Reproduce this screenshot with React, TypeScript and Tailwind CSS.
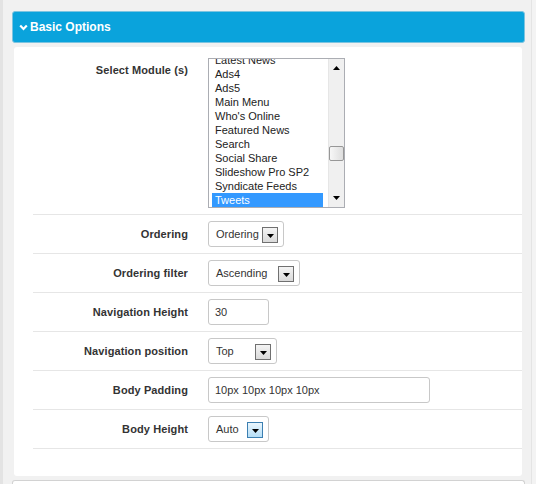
const font = { fontFamily: '"Liberation Sans", Arial, sans-serif' };

const modules = [
  "Latest News",
  "Ads4",
  "Ads5",
  "Main Menu",
  "Who's Online",
  "Featured News",
  "Search",
  "Social Share",
  "Slideshow Pro SP2",
  "Syndicate Feeds",
  "Tweets",
];

function ArrowDown({ className = "" }: { className?: string }) {
  return (
    <svg width="7" height="4" viewBox="0 0 7 4" className={className}>
      <polygon points="0,0 7,0 3.5,4" fill="#000" />
    </svg>
  );
}

function ArrowUp() {
  return (
    <svg width="7" height="4" viewBox="0 0 7 4">
      <polygon points="0,4 7,4 3.5,0" fill="#000" />
    </svg>
  );
}

function SelectBox({ value, width, active = false }: { value: string; width: string; active?: boolean }) {
  return (
    <div
      className={`${width} h-[26px] flex items-center bg-white border border-[#c8c8c8] rounded-[3px] pl-[7px] text-[11px] text-[#333]`}
    >
      <span>{value}</span>
      <div
        className={
          active
            ? "ml-auto mr-[5px] mt-[2px] w-[16px] h-[16px] flex items-center justify-center border border-[#3c7fb1] bg-gradient-to-b from-[#eaf6fd] to-[#b5def6]"
            : "ml-auto mr-[5px] mt-[2px] w-[16px] h-[16px] flex items-center justify-center border border-[#707070] bg-gradient-to-b from-[#f4f4f4] to-[#dadada]"
        }
      >
        <ArrowDown className="mt-[2px]" />
      </div>
    </div>
  );
}

function TextInput({ value, width }: { value: string; width: string }) {
  return (
    <div
      className={`${width} h-[26px] flex items-center bg-white border border-[#c8c8c8] rounded-[3px] pl-[6px] text-[11px] text-[#333]`}
    >
      {value}
    </div>
  );
}

function Row({ label, children }: { label: string; children: React.ReactNode }) {
  return (
    <div className="h-[39px] flex items-center border-b border-[#e6e6e6]">
      <div className="w-[155px] text-right text-[11px] font-bold text-[#333] tracking-[0.1px]">{label}</div>
      <div className="ml-[20px]">{children}</div>
    </div>
  );
}

function ModuleList() {
  return (
    <div className="w-[137px] h-[150px] flex border border-[#abadb3] bg-white overflow-hidden">
      <div className="w-[119px] pl-[3px] overflow-hidden">
        <div className="mt-[-6px]">
          {modules.map((m) => (
            <div
              key={m}
              className={
                m === "Tweets"
                  ? "h-[14px] leading-[14px] pl-[3px] w-[111px] text-[11px] bg-[#3399ff] text-white"
                  : "h-[14px] leading-[14px] pl-[3px] w-[111px] text-[11px] text-[#222]"
              }
            >
              {m}
            </div>
          ))}
        </div>
      </div>
      <div className="w-[16px] flex flex-col items-center bg-[#f0f0f0] border-l border-[#e6e6e6]">
        <div className="h-[17px] flex items-center justify-center pt-[1px]">
          <ArrowUp />
        </div>
        <div className="mt-[70px] w-[15px] h-[15px] rounded-[2px] border border-[#979797] bg-gradient-to-r from-[#f7f7f7] to-[#dedede]" />
        <div className="mt-auto h-[17px] flex items-center justify-center pb-[2px]">
          <ArrowDown />
        </div>
      </div>
    </div>
  );
}

export default function App() {
  return (
    <div className="w-[536px] h-[484px] flex bg-[#f1f1f1] overflow-hidden" style={font}>
      <div className="w-[3px] bg-[#e3e3e3]" />
      <div className="w-[528px] pt-[11px]">
        <div className="ml-[9px] w-[513px] h-[32px] flex items-center bg-[#0aa3dc] border border-[#7cc4e0] rounded-[3px] pl-[6px] text-white text-[12px] font-bold">
          <svg width="9" height="7" viewBox="0 0 9 7" className="mr-[2px]">
            <polyline points="1.2,1.5 4.5,5 7.8,1.5" fill="none" stroke="#fff" strokeWidth="2.2" />
          </svg>
          <span>Basic Options</span>
        </div>
        <div className="ml-[11px] mt-[4px] w-[508px] h-[429px] bg-white rounded-[3px]">
          <div className="ml-[19px]">
            <div className="flex items-start pt-[11px] pb-[6px] border-b border-[#e6e6e6]">
              <div className="w-[155px] text-right text-[11px] font-bold text-[#333] leading-[25px] tracking-[0.1px]">
                Select Module (s)
              </div>
              <div className="ml-[20px]">
                <ModuleList />
              </div>
            </div>
            <Row label="Ordering">
              <SelectBox value="Ordering" width="w-[76px]" />
            </Row>
            <Row label="Ordering filter">
              <SelectBox value="Ascending" width="w-[92px]" />
            </Row>
            <Row label="Navigation Height">
              <TextInput value="30" width="w-[61px]" />
            </Row>
            <Row label="Navigation position">
              <SelectBox value="Top" width="w-[69px]" />
            </Row>
            <Row label="Body Padding">
              <TextInput value="10px 10px 10px 10px" width="w-[222px]" />
            </Row>
            <Row label="Body Height">
              <SelectBox value="Auto" width="w-[61px]" active />
            </Row>
          </div>
        </div>
        <div className="ml-[9px] mt-[4px] w-[513px] h-[12px] bg-white border-t border-x border-[#d2d2d2] rounded-t-[3px]" />
      </div>
      <div className="w-[1px] bg-[#e4e4e4]" />
      <div className="flex-1 bg-[#f3f3f3]" />
    </div>
  );
}
